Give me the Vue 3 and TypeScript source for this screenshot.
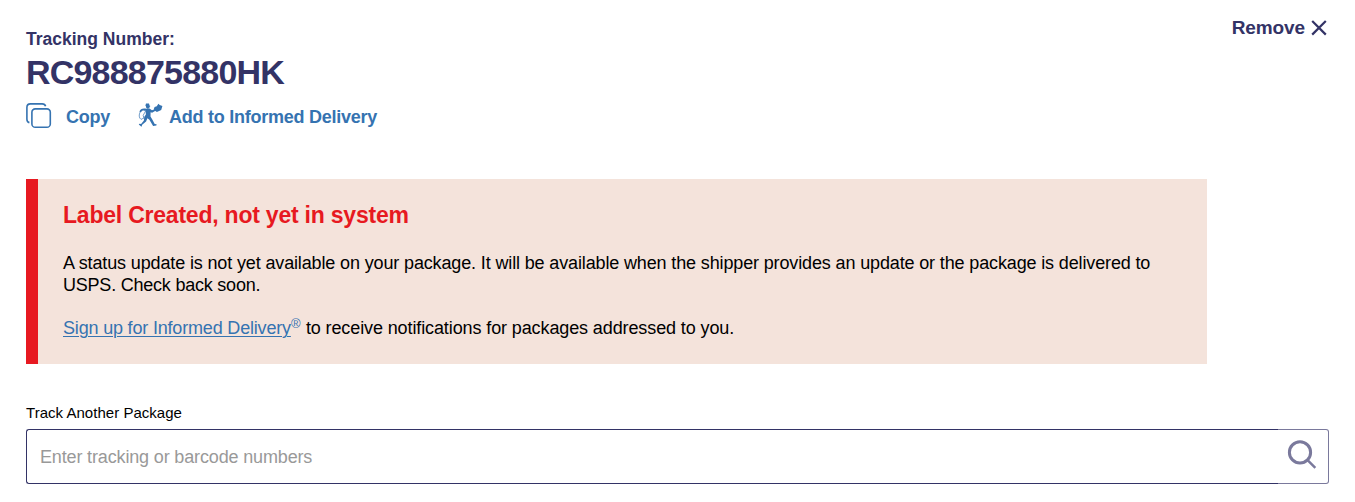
<script setup lang="ts">
import { ref } from 'vue'

const trackingNumber = 'RC988875880HK'
const query = ref('')
</script>

<template>
  <main class="page">
    <header class="top">
      <div class="summary">
        <h3 class="label">Tracking Number:</h3>
        <div class="number">{{ trackingNumber }}</div>
        <div class="actions">
          <a class="action copy">
            <svg class="copy-icon" viewBox="0 0 26 26" width="26" height="26" fill="none" stroke="#3573b1" stroke-width="1.6">
              <rect x="5.9" y="5.9" width="18.4" height="18.4" rx="3.4" />
              <path d="M3.4 19.6C1.7 19.2 .9 18 .9 16.2V4.4C.9 2.2 2.2.9 4.4.9h11.8c1.8 0 3 .7 3.4 2.3" />
            </svg>
            <span>Copy</span>
          </a>
          <a class="action informed">
            <svg class="carrier-icon" viewBox="0 0 25 25" width="25" height="25" fill="#3573b1">
              <path d="M7.4 2.8 8 .5l3 .1.5 2 .9.4-.7.7-.5 1.5-1.9.5-1.2-1.2-.2-1.3z" />
              <path d="m16.6 4 2.2-.7L20.4.8l1.3 1.1 2.7 1-1.2 4.2-4.3 2-2.3-1.5-.8-1.6z" />
              <path d="m7.8 5.8 3.6-.2 2.6 1.7 3.2-1.4.7 1.5-3.8 2.3-1.5-.4-.1 4.2 1.8 2.9 2.4 4.6 1.9.2-.2 1.3-3.3.5-3.7-6.3-2-1.4-1.3 3.2-4.2 3.6.1 1.3-1.2-.1-2-1.8.6-.7 1.7.1 2.8-3.3.4-3.8 1.6-2.2-.2-2.8z" />
              <path d="M8.2 5.8C4.4 5 2.4 6.2 1.4 8.7l1.6.6C3.7 7.7 4.6 7.3 6.4 7.5l1 1.7z" />
              <path d="M2.3 8.8C.7 11.5.8 15 3 16.4l3-1.5M7.3 8.6l-2.1 3.7.8 3.2" fill="none" stroke="#3573b1" stroke-width=".7" />
            </svg>
            <span>Add to Informed Delivery</span>
          </a>
        </div>
      </div>
      <a class="remove">
        <span>Remove</span>
        <svg viewBox="0 0 16 16" width="16" height="16" stroke="#333366" stroke-width="2.2" fill="none">
          <path d="m1.2 1 13.6 13.6M14.8 1 1.2 14.6" />
        </svg>
      </a>
    </header>

    <section class="banner">
      <h2 class="status">Label Created, not yet in system</h2>
      <p class="detail">
        <span class="line first">A status update is not yet available on your package. It will be available when the shipper provides an update or the package is delivered to</span>
        <span class="line second">USPS. Check back soon.</span>
      </p>
      <p class="signup"><a class="link"><span class="link-text">Sign up for Informed Delivery</span><sup>®</sup></a><span class="rest">to receive notifications for packages addressed to you.</span></p>
    </section>

    <form class="search" @submit.prevent>
      <label class="search-label" for="track">Track Another Package</label>
      <div class="field">
        <input id="track" v-model="query" type="text" placeholder="Enter tracking or barcode numbers" />
        <button type="submit" aria-label="Search">
          <svg viewBox="0 0 30 30" width="30" height="30" fill="none" stroke="#7a799c">
            <circle cx="13" cy="12.4" r="10.6" stroke-width="3" />
            <path d="m20.3 19.9 8 7.9" stroke-width="2.5" />
          </svg>
        </button>
      </div>
    </form>
  </main>
</template>

<style>
body {
  margin: 0;
  background: #fff;
}
</style>

<style scoped>
.page {
  box-sizing: border-box;
  width: 1355px;
  height: 502px;
  padding: 17px 26px 0;
  overflow: hidden;
  font-family: "Liberation Sans", Arial, sans-serif;
  color: #000;
}
h2, h3, p {
  margin: 0;
}
span {
  white-space: nowrap;
}
.top {
  display: flex;
  justify-content: space-between;
  align-items: flex-start;
  height: 162px;
  color: #333366;
}
.label {
  margin-top: 11px;
  font-size: 17.5px;
  line-height: 22px;
}
.number {
  font-size: 34px;
  line-height: 40px;
  font-weight: 700;
  margin-top: 2px;
  letter-spacing: -0.8px;
}
.actions {
  display: flex;
  margin-top: 9px;
  height: 30px;
  color: #3573b1;
  font-size: 18px;
  line-height: 32px;
  font-weight: 700;
  letter-spacing: -0.25px;
}
.action {
  display: flex;
}
.copy {
  width: 112px;
}
.copy-icon {
  margin: 2px 14px 0 0;
}
.carrier-icon {
  margin: 2px 6px 0 0;
}
.remove {
  display: flex;
  align-items: center;
  gap: 6px;
  height: 22px;
  margin-right: 2px;
  font-size: 19px;
  font-weight: 700;
  letter-spacing: -0.1px;
}
.banner {
  box-sizing: border-box;
  width: 1181px;
  height: 185px;
  padding: 22px 25px 0;
  border-left: 12px solid #e71921;
  background: #f4e3db;
  font-size: 18px;
}
.status {
  color: #e71921;
  font-size: 23px;
  line-height: 28px;
  letter-spacing: -0.22px;
}
.detail {
  margin-top: 23px;
}
.line {
  display: block;
  line-height: 22px;
}
.first {
  letter-spacing: -0.138px;
}
.second {
  letter-spacing: -0.22px;
}
.signup {
  display: flex;
  margin-top: 21px;
  line-height: 22px;
}
.link {
  display: flex;
  color: #3573b1;
}
.link-text {
  letter-spacing: -0.18px;
  text-decoration: underline;
  text-decoration-thickness: 1px;
  text-underline-offset: 2px;
}
.rest {
  letter-spacing: -0.11px;
}
sup {
  width: 15px;
  font-size: 13px;
  line-height: 13px;
}
.search {
  margin-top: 39px;
}
.search-label {
  display: block;
  font-size: 15px;
  line-height: 20px;
  letter-spacing: 0.03px;
}
.field {
  display: flex;
  height: 55px;
  margin-top: 6px;
}
input {
  box-sizing: border-box;
  width: 1252px;
  padding: 2px 13px 0;
  border: 1px solid #333366;
  border-right: 0;
  border-radius: 3px 0 0 3px;
  outline: 0;
  background: #fff;
  font: 18px "Liberation Sans", Arial, sans-serif;
  letter-spacing: -0.15px;
}
input::placeholder {
  color: #999;
  opacity: 1;
}
button {
  box-sizing: border-box;
  display: flex;
  width: 51px;
  padding: 10px 0 0 9px;
  border: 1px solid #7a799c;
  border-left: 0;
  border-radius: 0 3px 3px 0;
  background: #fff;
}
</style>
